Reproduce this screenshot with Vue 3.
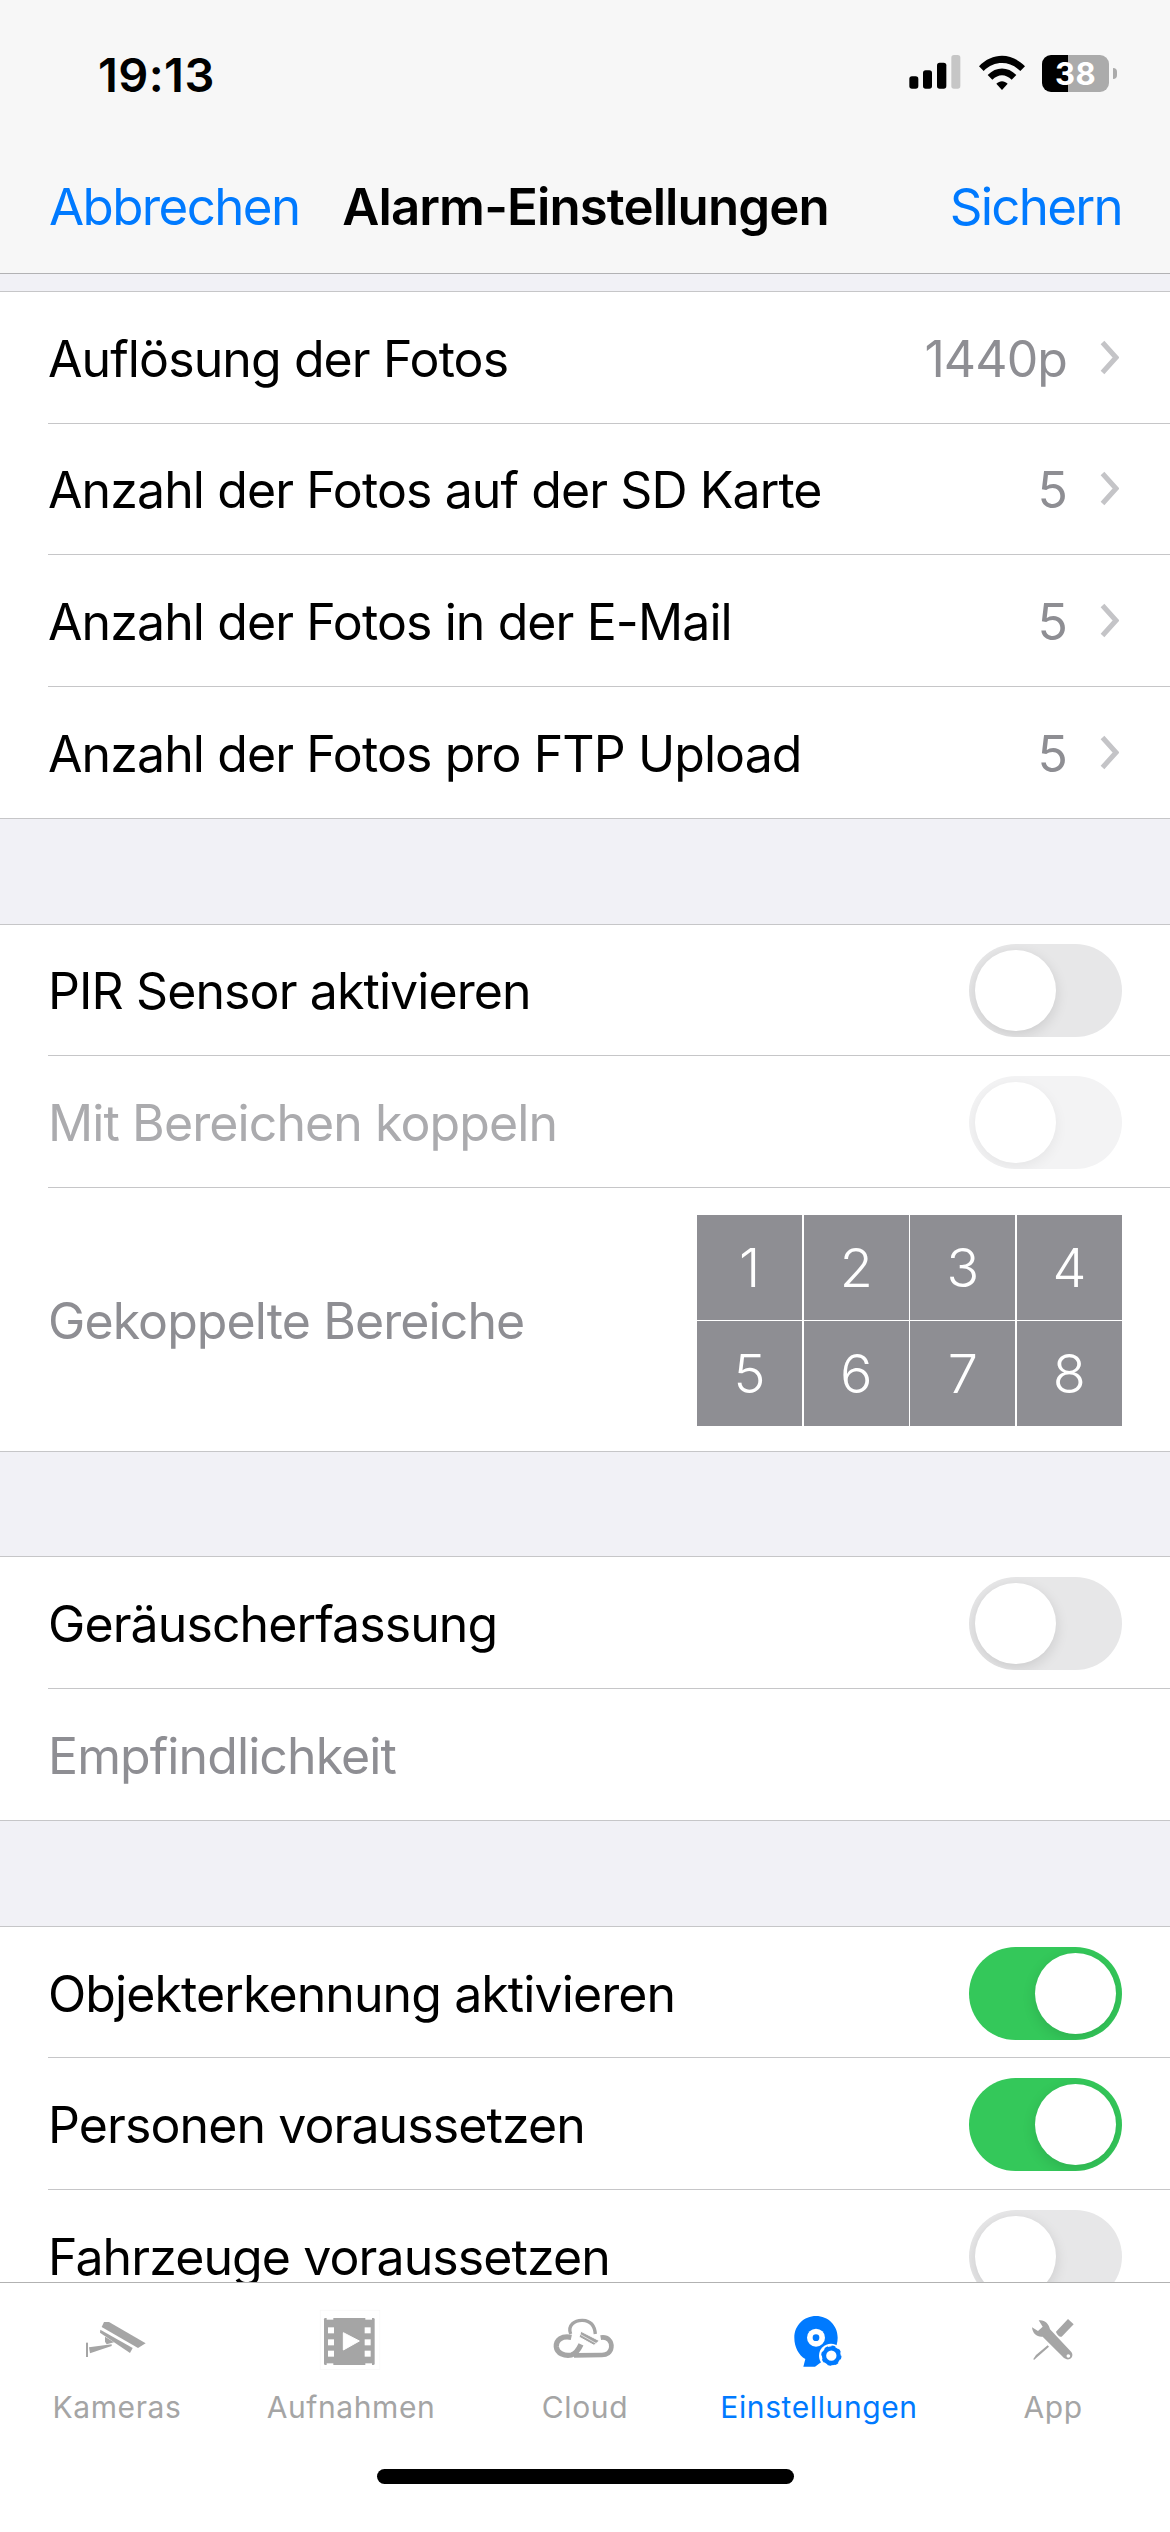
<template>
  <div class="phone">
    <header class="top">
      <div class="status">
        <span class="time">19:13</span>
        <div class="status-icons">
          <svg class="signal" width="52" height="36" viewBox="0 0 156 108">
            <rect x="1" y="64" width="27" height="37" rx="8" />
            <rect x="42" y="46" width="27" height="55" rx="8" />
            <rect x="84" y="23" width="28" height="78" rx="8" />
            <rect x="127" y="0" width="27" height="101" rx="8" fill="#c6c6c6" />
          </svg>
          <svg class="wifi" width="50" height="36" viewBox="0 0 150 108">
            <path d="M6 34 C46 -8 104 -8 144 34 L130 48 C98 16 52 16 20 48 Z" />
            <path d="M32 60 C58 34 92 34 118 60 L104 74 C86 56 64 56 46 74 Z" />
            <path d="M58 86 C68 76 82 76 92 86 L75 105 Z" />
          </svg>
          <div class="battery"><span class="battery-level">38</span></div>
          <span class="battery-nub"></span>
        </div>
      </div>
      <nav class="nav">
        <span class="nav-btn">Abbrechen</span>
        <span class="nav-title">Alarm-Einstellungen</span>
        <span class="nav-btn nav-save">Sichern</span>
      </nav>
    </header>

    <main class="content">
      <section v-for="(group, g) in groups" :key="g" class="group">
        <div v-for="row in group" :key="row.label" class="row" :class="{ tall: row.grid }">
          <span class="label" :class="row.tone">{{ row.label }}</span>
          <div v-if="row.value" class="value">
            <span class="label">{{ row.value }}</span>
            <svg width="19" height="35" viewBox="0 0 19 35">
              <path d="M2.5 2.5 L16 17.5 L2.5 32.5" fill="none" stroke="#c4c4c7" stroke-width="5" />
            </svg>
          </div>
          <div v-else-if="row.toggle" class="toggle" :class="[row.toggle]">
            <span class="knob"></span>
          </div>
          <div v-else-if="row.grid" class="zones">
            <span v-for="n in 8" :key="n" class="zone">{{ n }}</span>
          </div>
        </div>
      </section>
    </main>

    <footer class="tabs">
      <div class="tab-row">
        <div class="tab">
          <svg width="180" height="90" viewBox="-69 0 540 270" fill="#a5a5a5">
            <rect x="108" y="158" width="6" height="43" />
            <path d="M117 172 L185 163 L185 168 L120 190 Z" />
            <path d="M165 140 L192 157 L170 163 L165 155 Z" />
            <path d="M162 96 L177 96 L287 160 L264 174 L155 111 Z" />
            <path d="M151 119 L248 174 L240 189 L150 128 Z" />
          </svg>
          <span>Kameras</span>
        </div>
        <div class="tab">
          <svg width="90" height="90" viewBox="18 0 270 270">
            <rect x="60.5" y="60.5" width="179" height="178" fill="none" stroke="#f6f6f6" stroke-width="2" />
            <rect x="72" y="84" width="152" height="141" rx="4" fill="#a5a5a5" />
            <g fill="#fff">
              <rect v-for="y in filmHoles" :key="`l${y}`" x="84" :y="y" width="18" height="18" />
              <rect v-for="y in filmHoles" :key="`r${y}`" x="194" :y="y" width="18" height="18" />
              <rect x="80" y="82" width="20" height="7" />
              <rect x="196" y="82" width="20" height="7" />
              <rect x="80" y="220" width="20" height="6" />
              <rect x="196" y="220" width="20" height="6" />
              <path d="M130 128 L178 153 L130 180 Z" stroke="#fff" stroke-width="3" stroke-linejoin="round" />
            </g>
          </svg>
          <span>Aufnahmen</span>
        </div>
        <div class="tab">
          <svg width="110" height="90" viewBox="0 0 330 270" fill="none" stroke="#a5a5a5">
            <path d="M124 142 C96 136 78 150 79 170 C81 190 104 199 124 195 C136 192 146 178 153 163" stroke-width="16" />
            <path d="M122 132 C112 106 134 90 158 91 C180 92 194 106 196 132" stroke-width="10" />
            <path d="M212 143 C234 139 246 155 244 172 C242 188 230 195 216 195 L132 196" stroke-width="14" />
            <path d="M153 124 L208 152 L192 166 L147 141 Z" fill="#a5a5a5" stroke="#fff" stroke-width="3" />
            <path d="M150 133 L198 160" stroke="#fff" stroke-width="2" />
          </svg>
          <span>Cloud</span>
        </div>
        <div class="tab active">
          <svg width="90" height="90" viewBox="12 0 270 270">
            <path d="M138 78 C174 78 203 106 203 143 C203 172 186 196 165 208 L135 230 L100 230 L106 207 C86 195 73 171 73 143 C73 106 102 78 138 78 Z" fill="#007aff" />
            <circle cx="138" cy="143" r="27" fill="#fff" />
            <circle cx="138" cy="143" r="10" fill="#007aff" />
            <circle cx="183" cy="197" r="36" fill="#fff" />
            <circle cx="184" cy="197" r="22" fill="none" stroke="#007aff" stroke-width="13" />
            <circle cx="184" cy="197" r="27" fill="none" stroke="#007aff" stroke-width="7" stroke-dasharray="10.6 10.6" />
          </svg>
          <span>Einstellungen</span>
        </div>
        <div class="tab">
          <svg width="110" height="90" viewBox="-6 0 330 270" fill="#a5a5a5">
            <path d="M116 91 C132 88 147 100 150 118 L214 186 C222 197 214 210 200 208 L192 204 L128 140 C112 142 98 132 96 112 L114 123 L128 110 Z" />
            <circle cx="205" cy="198" r="5.5" fill="#fff" />
            <path d="M168 125 L204 87 L221 103 L185 140 C180 143 170 133 168 125 Z" />
            <path d="M143 166 L147 170 L112 201 L102 210 L100 207 L108 195 Z" />
          </svg>
          <span>App</span>
        </div>
      </div>
      <div class="home-bar"></div>
    </footer>
  </div>
</template>

<script setup>
const filmHoles = [112, 148, 182]

const groups = [
  [
    { label: 'Auflösung der Fotos', value: '1440p' },
    { label: 'Anzahl der Fotos auf der SD Karte', value: '5' },
    { label: 'Anzahl der Fotos in der E-Mail', value: '5' },
    { label: 'Anzahl der Fotos pro FTP Upload', value: '5' }
  ],
  [
    { label: 'PIR Sensor aktivieren', toggle: 'off' },
    { label: 'Mit Bereichen koppeln', toggle: 'dim', tone: 'faint' },
    { label: 'Gekoppelte Bereiche', grid: true, tone: 'muted' }
  ],
  [
    { label: 'Geräuscherfassung', toggle: 'off' },
    { label: 'Empfindlichkeit', tone: 'muted' }
  ],
  [
    { label: 'Objekterkennung aktivieren', toggle: 'on' },
    { label: 'Personen voraussetzen', toggle: 'on' },
    { label: 'Fahrzeuge voraussetzen', toggle: 'off' }
  ]
]
</script>

<style scoped>
.phone {
  width: 1170px;
  height: 2532px;
  display: flex;
  flex-direction: column;
  overflow: hidden;
  background: #f1f1f6;
  color: #000;
  font-family: Inter, "Liberation Sans", sans-serif;
}

.top {
  height: 274px;
  flex: none;
  box-sizing: border-box;
  background: #f7f7f7;
  border-bottom: 1px solid #b2b2b4;
}

.status {
  height: 150px;
  box-sizing: border-box;
  padding: 51px 53px 0 98px;
  display: flex;
  justify-content: space-between;
  align-items: flex-start;
}

.time {
  font-size: 47px;
  line-height: 47px;
  font-weight: 600;
  letter-spacing: 0.4px;
}

.status-icons {
  display: flex;
  align-items: flex-start;
  margin-top: 4px;
}

.signal {
  margin-right: 16px;
}

.wifi {
  margin-right: 15px;
}

.battery {
  width: 67px;
  height: 37px;
  border-radius: 9px;
  background: linear-gradient(90deg, #000 0 26px, #ababab 26px);
  display: flex;
  justify-content: center;
  align-items: center;
}

.battery-level {
  color: #fff;
  font-size: 31px;
  font-weight: 700;
  letter-spacing: 0.5px;
}

.battery-nub {
  width: 4px;
  height: 11px;
  margin: 13px 0 0 4px;
  border-radius: 0 6px 6px 0;
  background: #ababab;
}

.nav {
  display: grid;
  grid-template-columns: 1fr auto 1fr;
  align-items: center;
  padding: 0 48px 0 49px;
  height: 113px;
}

.nav-btn {
  color: #007aff;
  font-size: 51px;
  letter-spacing: -1.6px;
}

.nav-save {
  text-align: right;
  letter-spacing: -1.7px;
}

.nav-title {
  font-size: 51px;
  font-weight: 600;
  letter-spacing: -0.9px;
}

.content {
  flex: 1;
  min-height: 0;
  overflow: hidden;
  padding-top: 17px;
  display: flex;
  flex-direction: column;
  gap: 104.67px;
}

.group {
  flex: none;
  background: #fff;
  padding-left: 48px;
  border-top: 1px solid #c6c6c8;
  border-bottom: 1px solid #c6c6c8;
}

.row {
  height: 131.5px;
  box-sizing: border-box;
  padding-right: 48px;
  display: flex;
  justify-content: space-between;
  align-items: center;
  border-bottom: 1px solid #c6c6c8;
  font-size: 50px;
  letter-spacing: -0.9px;
}

.row:last-child {
  border-bottom: 0;
}

.row.tall {
  height: 263px;
}

.label {
  padding-top: 3px;
}

.label.faint {
  color: #ababae;
}

.label.muted {
  color: #8e8e93;
}

.value {
  display: flex;
  align-items: center;
  gap: 33px;
  margin-right: 3px;
  color: #8e8e93;
}

.toggle {
  width: 153px;
  height: 93px;
  box-sizing: border-box;
  padding: 6px;
  margin-top: 2px;
  border-radius: 47px;
  overflow: hidden;
  display: flex;
  background: #e7e7e8;
}

.toggle.dim {
  background: #f3f3f4;
}

.toggle.on {
  background: #34c85a;
  justify-content: flex-end;
}

.knob {
  width: 81px;
  height: 81px;
  border-radius: 50%;
  background: #fff;
  box-shadow: 0 4px 14px rgba(0, 0, 0, 0.12);
}

.toggle.dim .knob {
  box-shadow: 0 4px 14px rgba(0, 0, 0, 0.06);
}

.zones {
  width: 425px;
  display: grid;
  grid-template-columns: repeat(4, 1fr);
  grid-auto-rows: 105px;
  gap: 1px 1.33px;
  background: #fff;
  margin-top: 2px;
}

.zone {
  background: #8e8e93;
  color: #fff;
  font-size: 54px;
  font-weight: 300;
  letter-spacing: 0;
  display: flex;
  align-items: center;
  justify-content: center;
}

.tabs {
  flex: none;
  height: 250px;
  box-sizing: border-box;
  background: #fff;
  border-top: 1px solid #b2b2b2;
  padding-top: 7px;
}

.tab-row {
  display: grid;
  grid-template-columns: repeat(5, 234px);
}

.tab {
  display: flex;
  flex-direction: column;
  align-items: center;
  color: #a5a5a5;
  font-size: 30px;
  line-height: 36px;
  letter-spacing: 0.6px;
}

.tab svg {
  margin-bottom: 9px;
}

.tab.active {
  color: #007aff;
}

.home-bar {
  width: 417px;
  height: 15px;
  border-radius: 8px;
  background: #000;
  margin: 44px auto 0;
}
</style>
